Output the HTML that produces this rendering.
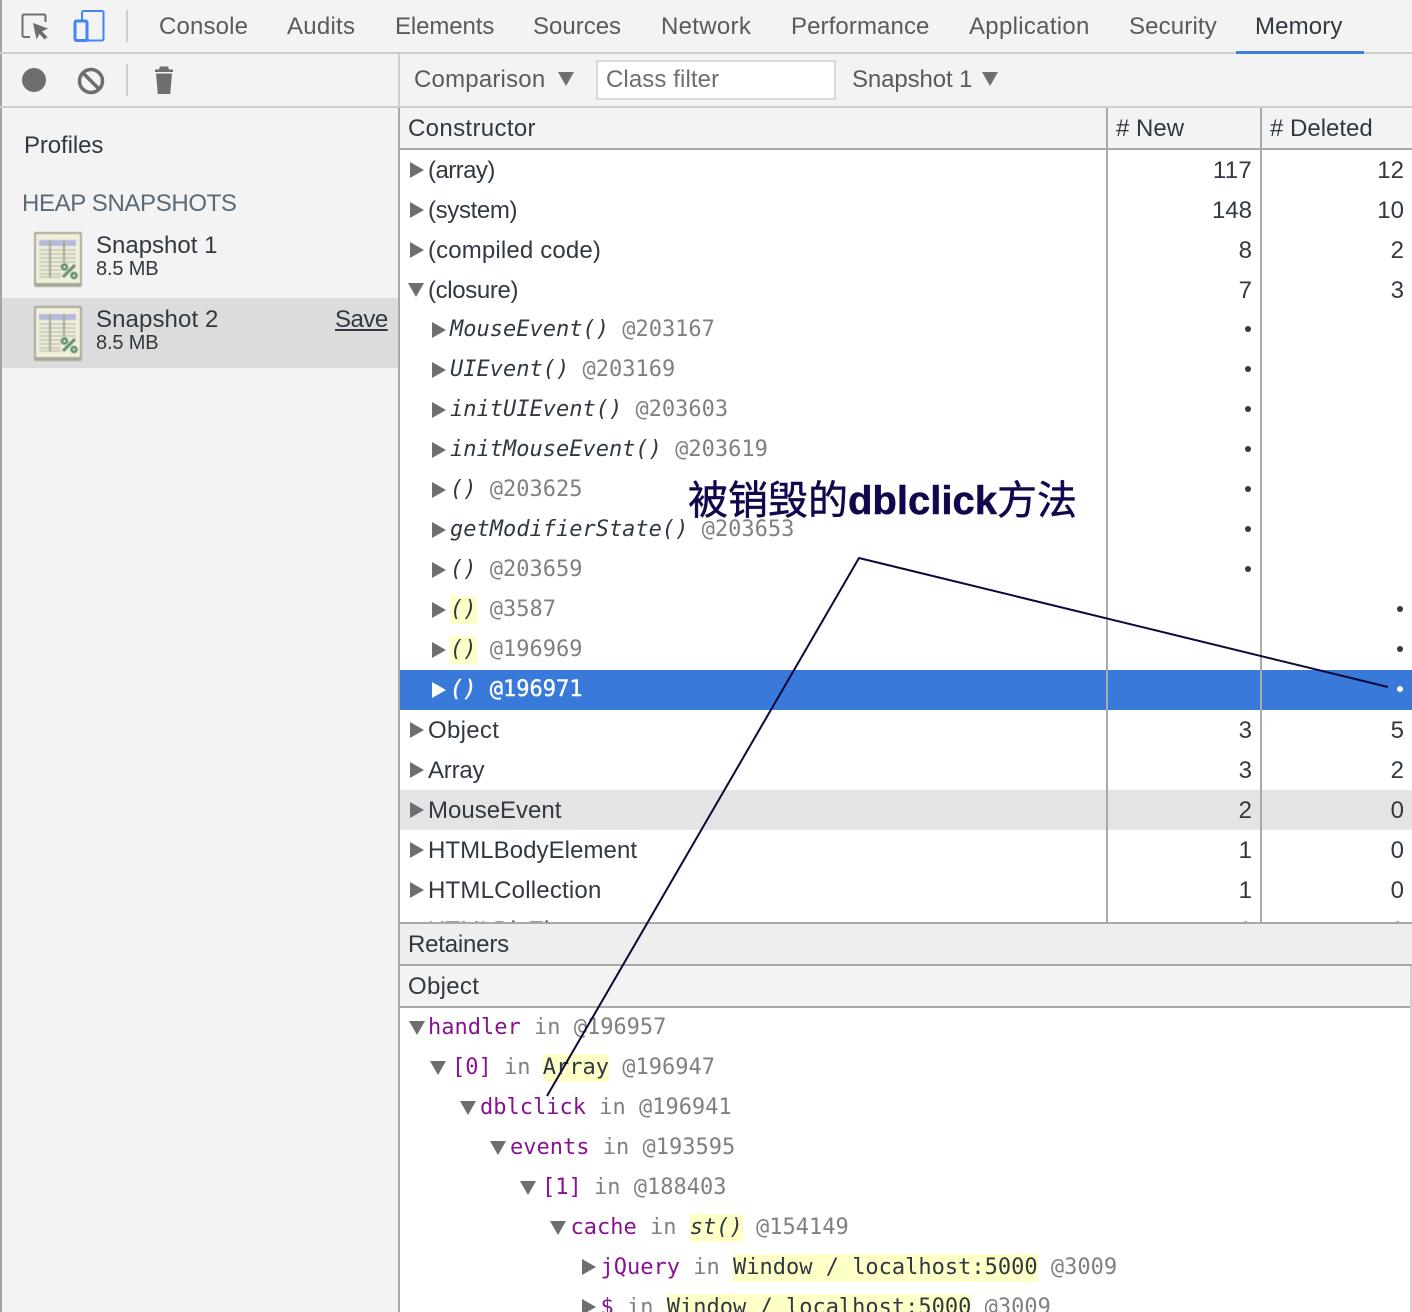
<!DOCTYPE html>
<html><head><meta charset="utf-8"><style>
html,body{margin:0;padding:0;background:#fff}
#p{position:relative;width:1412px;height:1312px;overflow:hidden;background:#fff;font-family:"Liberation Sans",sans-serif;font-size:24px;color:#303942}
.a{position:absolute}
.t{position:absolute;white-space:pre;line-height:40px;height:40px;margin-top:1px}
.tab{position:absolute;top:6px;line-height:40px;color:#5a5a5a;white-space:pre;margin-top:1px}
.m{font-family:"DejaVu Sans Mono","Liberation Mono",monospace;font-size:22px}
.rr{margin-top:2px}
.g{color:#808080}.pu{color:#881391}.y{background:#ffffc8;display:inline-block;line-height:28px}
i{font-style:italic}
.r{position:absolute;left:400px;width:1012px;height:40px}
.n{position:absolute;white-space:pre;line-height:40px;text-align:right;margin-top:1px}
.tr{position:absolute;width:0;height:0;border-style:solid;border-color:transparent transparent transparent #6e6e6e;border-width:8px 0 8px 14px}
.td{position:absolute;width:0;height:0;border-style:solid;border-color:#6e6e6e transparent transparent transparent;border-width:14px 8px 0 8px}
.dot{position:absolute;width:6px;height:6px;border-radius:50%;background:#303942}
</style></head><body><div id="p">
<!-- backgrounds -->
<div class="a" style="left:0;top:0;width:1412px;height:106px;background:#f3f3f3"></div>
<div class="a" style="left:0;top:108px;width:398px;height:1204px;background:#f3f3f3"></div>
<div class="a" style="left:0;top:0;width:2px;height:1312px;background:#a3a3a3"></div>
<div class="a" style="left:0;top:52px;width:1412px;height:2px;background:#cdcdcd"></div>
<div class="a" style="left:0;top:106px;width:1412px;height:2px;background:#cdcdcd"></div>
<div class="a" style="left:398px;top:54px;width:2px;height:1258px;background:#a9a9a9"></div>
<div class="a" style="left:398px;top:54px;width:2px;height:54px;background:#cdcdcd"></div>
<!-- top icons -->
<svg class="a" style="left:0;top:0" width="400" height="108" fill="none">
<path d="M30 37H24a1.500 1.500 0 0 1-1.500-1.500V16a1.500 1.500 0 0 1 1.500-1.500H44a1.500 1.500 0 0 1 1.500 1.500v6" stroke="#6e6e6e" stroke-width="2"/>
<path d="M33 23L48 28.500L42 31.500L47.500 37L44.500 39.500L39.500 34L36.500 39.500Z" fill="#6e6e6e"/>
<rect x="75" y="21" width="12" height="19.500" rx="1.500" stroke="#4285f4" stroke-width="3"/>
<path d="M82 21V12.500a1.500 1.500 0 0 1 1.500-1.500H102a1.500 1.500 0 0 1 1.500 1.500V39a1.500 1.500 0 0 1-1.500 1.500H87" stroke="#4285f4" stroke-width="2"/>
<rect x="126" y="10" width="2" height="32" fill="#cdcdcd"/>
<circle cx="34" cy="80" r="12" fill="#6e6e6e"/>
<circle cx="91" cy="81" r="11.500" stroke="#6e6e6e" stroke-width="3.500"/>
<path d="M83 73L99 89" stroke="#6e6e6e" stroke-width="3.500"/>
<rect x="126" y="64" width="2" height="32" fill="#cdcdcd"/>
<path d="M155 69.500h4l1-3h8l1 3h4v2.500h-18z" fill="#6e6e6e"/>
<path d="M156 73.500h16l-1.800 20.500h-12.400z" fill="#6e6e6e"/>
</svg>
<!-- tabs -->
<div class="tab" style="left:159px;letter-spacing:.15px">Console</div>
<div class="tab" style="left:287px;letter-spacing:.25px">Audits</div>
<div class="tab" style="left:395px;letter-spacing:-.1px">Elements</div>
<div class="tab" style="left:533px">Sources</div>
<div class="tab" style="left:661px;letter-spacing:.3px">Network</div>
<div class="tab" style="left:791px;letter-spacing:.1px">Performance</div>
<div class="tab" style="left:969px;letter-spacing:.3px">Application</div>
<div class="tab" style="left:1129px;letter-spacing:.15px">Security</div>
<div class="tab" style="left:1255px;color:#303942;letter-spacing:.15px">Memory</div>
<div class="a" style="left:1236px;top:51px;width:128px;height:3px;background:#3f7fe0"></div>
<!-- toolbar -->
<div class="t" style="left:414px;top:59px;color:#5a5a5a;letter-spacing:.2px">Comparison</div>
<div class="a" style="left:558px;top:72px;width:0;height:0;border-style:solid;border-color:#6e6e6e transparent transparent transparent;border-width:14px 8px 0 8px"></div>
<div class="a" style="left:596px;top:60px;width:236px;height:36px;background:#fff;border:2px solid #d9d9d9"></div>
<div class="t" style="left:606px;top:59px;color:#6e6e6e;letter-spacing:.1px">Class filter</div>
<div class="t" style="left:852px;top:59px;color:#5a5a5a;letter-spacing:-.1px">Snapshot 1</div>
<div class="a" style="left:982px;top:72px;width:0;height:0;border-style:solid;border-color:#6e6e6e transparent transparent transparent;border-width:14px 8px 0 8px"></div>
<!-- sidebar -->
<div class="t" style="left:24px;top:125px;letter-spacing:-.1px">Profiles</div>
<div class="t" style="left:22px;top:183px;color:#5a6a78;letter-spacing:-.36px">HEAP SNAPSHOTS</div>
<div class="a" style="left:2px;top:298px;width:396px;height:70px;background:#dcdcdc"></div>
<svg class="a" style="left:33px;top:231px;filter:blur(.6px)" width="50" height="58">
<rect x="1" y="1" width="48" height="55" rx="2" fill="#a8a898"/><rect x="3" y="3" width="44" height="49" fill="#f1f0dc"/><rect x="6" y="9" width="37" height="6" fill="#b5b9dc"/>
<path d="M6 19h37M6 23h37M6 27h37M6 31h37M6 35h22M6 39h22M6 43h22M6 46h22" stroke="#c2c2b2" stroke-width="1.500"/><path d="M17 9v38M31 9v22" stroke="#a8a89c" stroke-width="2"/>
<path d="M30 46L42 34" stroke="#5e8c6a" stroke-width="3"/><circle cx="31.500" cy="36" r="2.500" fill="none" stroke="#5e8c6a" stroke-width="2.500"/><circle cx="41" cy="44.500" r="2.500" fill="none" stroke="#5e8c6a" stroke-width="2.500"/></svg>
<svg class="a" style="left:33px;top:305px;filter:blur(.6px)" width="50" height="58">
<rect x="1" y="1" width="48" height="55" rx="2" fill="#a8a898"/><rect x="3" y="3" width="44" height="49" fill="#f1f0dc"/><rect x="6" y="9" width="37" height="6" fill="#b5b9dc"/>
<path d="M6 19h37M6 23h37M6 27h37M6 31h37M6 35h22M6 39h22M6 43h22M6 46h22" stroke="#c2c2b2" stroke-width="1.500"/><path d="M17 9v38M31 9v22" stroke="#a8a89c" stroke-width="2"/>
<path d="M30 46L42 34" stroke="#5e8c6a" stroke-width="3"/><circle cx="31.500" cy="36" r="2.500" fill="none" stroke="#5e8c6a" stroke-width="2.500"/><circle cx="41" cy="44.500" r="2.500" fill="none" stroke="#5e8c6a" stroke-width="2.500"/></svg>
<div class="t" style="left:96px;top:225px">Snapshot 1</div>
<div class="t" style="left:96px;top:248px;font-size:20px;letter-spacing:-.15px">8.5 MB</div>
<div class="t" style="left:96px;top:299px;letter-spacing:.1px">Snapshot 2</div>
<div class="t" style="left:96px;top:322px;font-size:20px;letter-spacing:-.15px">8.5 MB</div>
<div class="t" style="left:335px;top:299px;text-decoration:underline;letter-spacing:-.5px">Save</div>
<!-- table header -->
<div class="a" style="left:400px;top:108px;width:1012px;height:40px;background:#f3f3f3"></div>
<div class="a" style="left:400px;top:148px;width:1012px;height:2px;background:#a9a9a9"></div>
<div class="t" style="left:408px;top:108px;letter-spacing:.35px">Constructor</div>
<div class="t" style="left:1116px;top:108px"># New</div>
<div class="t" style="left:1270px;top:108px"># Deleted</div>
<!-- rows bg -->
<div class="r" style="top:670px;background:#3879d9"></div>
<div class="r" style="top:790px;background:#e4e4e4"></div>
<!-- rows -->
<i class="tr" style="left:410px;top:162px"></i><div class="t" style="left:428px;top:150px;letter-spacing:-.55px">(array)</div>
<i class="tr" style="left:410px;top:202px"></i><div class="t" style="left:428px;top:190px;letter-spacing:-.35px">(system)</div>
<i class="tr" style="left:410px;top:242px"></i><div class="t" style="left:428px;top:230px;letter-spacing:.15px">(compiled code)</div>
<i class="td" style="left:408px;top:283px"></i><div class="t" style="left:428px;top:270px;letter-spacing:-.35px">(closure)</div>

<i class="tr" style="left:432px;top:322px"></i><div class="t m" style="left:450px;top:309px"><i>MouseEvent()</i> <span class="g">@203167</span></div>
<i class="tr" style="left:432px;top:362px"></i><div class="t m" style="left:450px;top:349px"><i>UIEvent()</i> <span class="g">@203169</span></div>
<i class="tr" style="left:432px;top:402px"></i><div class="t m" style="left:450px;top:389px"><i>initUIEvent()</i> <span class="g">@203603</span></div>
<i class="tr" style="left:432px;top:442px"></i><div class="t m" style="left:450px;top:429px"><i>initMouseEvent()</i> <span class="g">@203619</span></div>
<i class="tr" style="left:432px;top:482px"></i><div class="t m" style="left:450px;top:469px"><i>()</i> <span class="g">@203625</span></div>
<i class="tr" style="left:432px;top:522px"></i><div class="t m" style="left:450px;top:509px"><i>getModifierState()</i> <span class="g">@203653</span></div>
<i class="tr" style="left:432px;top:562px"></i><div class="t m" style="left:450px;top:549px"><i>()</i> <span class="g">@203659</span></div>
<i class="tr" style="left:432px;top:602px"></i><div class="t m" style="left:450px;top:589px"><i class="y">()</i> <span class="g">@3587</span></div>
<i class="tr" style="left:432px;top:642px"></i><div class="t m" style="left:450px;top:629px"><i class="y">()</i> <span class="g">@196969</span></div>
<i class="tr" style="left:432px;top:682px;border-left-color:#fff"></i><div class="t m" style="left:450px;top:669px;color:#fff;-webkit-text-stroke:.4px #fff"><i>()</i> <span>@196971</span></div>

<i class="tr" style="left:410px;top:722px"></i><div class="t" style="left:428px;top:710px;letter-spacing:.3px">Object</div>
<i class="tr" style="left:410px;top:762px"></i><div class="t" style="left:428px;top:750px;letter-spacing:-.2px">Array</div>
<i class="tr" style="left:410px;top:802px"></i><div class="t" style="left:428px;top:790px">MouseEvent</div>
<i class="tr" style="left:410px;top:842px"></i><div class="t" style="left:428px;top:830px;letter-spacing:.07px">HTMLBodyElement</div>
<i class="tr" style="left:410px;top:882px"></i><div class="t" style="left:428px;top:870px;letter-spacing:.2px">HTMLCollection</div>
<i class="tr" style="left:410px;top:922px"></i><div class="t" style="left:428px;top:910px">HTMLDivElement</div>

<!-- numbers -->
<div class="n" style="right:160px;top:150px;letter-spacing:.3px">117</div><div class="n" style="right:8px;top:150px">12</div>
<div class="n" style="right:160px;top:190px">148</div><div class="n" style="right:8px;top:190px">10</div>
<div class="n" style="right:160px;top:230px">8</div><div class="n" style="right:8px;top:230px">2</div>
<div class="n" style="right:160px;top:270px">7</div><div class="n" style="right:8px;top:270px">3</div>
<div class="n" style="right:160px;top:710px">3</div><div class="n" style="right:8px;top:710px">5</div>
<div class="n" style="right:160px;top:750px">3</div><div class="n" style="right:8px;top:750px">2</div>
<div class="n" style="right:160px;top:790px">2</div><div class="n" style="right:8px;top:790px">0</div>
<div class="n" style="right:160px;top:830px">1</div><div class="n" style="right:8px;top:830px">0</div>
<div class="n" style="right:160px;top:870px">1</div><div class="n" style="right:8px;top:870px">0</div>
<div class="n" style="right:160px;top:910px">1</div><div class="n" style="right:8px;top:910px">1</div>
<!-- dots -->
<div class="dot" style="left:1245px;top:326px"></div>
<div class="dot" style="left:1245px;top:366px"></div>
<div class="dot" style="left:1245px;top:406px"></div>
<div class="dot" style="left:1245px;top:446px"></div>
<div class="dot" style="left:1245px;top:486px"></div>
<div class="dot" style="left:1245px;top:526px"></div>
<div class="dot" style="left:1245px;top:566px"></div>
<div class="dot" style="left:1397px;top:606px"></div>
<div class="dot" style="left:1397px;top:646px"></div>
<div class="dot" style="left:1397px;top:686px;background:#fff"></div>
<!-- col lines -->
<div class="a" style="left:1106px;top:108px;width:2px;height:815px;background:#a9a9a9"></div>
<div class="a" style="left:1260px;top:108px;width:2px;height:815px;background:#a9a9a9"></div>
<!-- retainers -->
<div class="a" style="left:400px;top:922px;width:1012px;height:390px;background:#fff"></div>
<div class="a" style="left:400px;top:922px;width:1012px;height:2px;background:#a9a9a9"></div>
<div class="a" style="left:400px;top:924px;width:1012px;height:40px;background:#eeeeee"></div>
<div class="a" style="left:400px;top:964px;width:1012px;height:2px;background:#a9a9a9"></div>
<div class="a" style="left:400px;top:966px;width:1012px;height:40px;background:#f3f3f3"></div>
<div class="a" style="left:400px;top:1006px;width:1012px;height:2px;background:#a9a9a9"></div>
<div class="a" style="left:1410px;top:966px;width:2px;height:346px;background:#d0d0d0"></div>
<div class="t" style="left:408px;top:924px;letter-spacing:-.2px">Retainers</div>
<div class="t" style="left:408px;top:966px;letter-spacing:.3px">Object</div>

<i class="td" style="left:409px;top:1021px"></i><div class="t m rr" style="left:428px;top:1006px"><span class="pu">handler</span> <span class="g">in @196957</span></div>
<i class="td" style="left:430px;top:1061px"></i><div class="t m rr" style="left:452px;top:1046px"><span class="pu">[0]</span> <span class="g" style="margin-left:-1px">in</span> <span class="y" style="margin-left:-1px">Array</span> <span class="g">@196947</span></div>
<i class="td" style="left:460px;top:1101px"></i><div class="t m rr" style="left:480px;top:1086px"><span class="pu">dblclick</span> <span class="g">in @196941</span></div>
<i class="td" style="left:490px;top:1141px"></i><div class="t m rr" style="left:510px;top:1126px"><span class="pu">events</span> <span class="g">in @193595</span></div>
<i class="td" style="left:520px;top:1181px"></i><div class="t m rr" style="left:542px;top:1166px"><span class="pu">[1]</span> <span class="g" style="margin-left:-1px">in @188403</span></div>
<i class="td" style="left:550px;top:1221px"></i><div class="t m rr" style="left:570.500px;top:1206px"><span class="pu">cache</span> <span class="g">in</span> <span class="y"><i>st()</i></span> <span class="g">@154149</span></div>
<i class="tr" style="left:582px;top:1259px"></i><div class="t m rr" style="left:600.500px;top:1246px"><span class="pu">jQuery</span> <span class="g">in</span> <span class="y">Window / localhost:5000</span> <span class="g">@3009</span></div>
<i class="tr" style="left:582px;top:1299px"></i><div class="t m rr" style="left:600.500px;top:1286px"><span class="pu">$</span> <span class="g">in</span> <span class="y">Window / localhost:5000</span> <span class="g">@3009</span></div>

<!-- annotation -->
<svg class="a" style="left:0;top:0" width="1412" height="1312" fill="none"><path d="M547 1096L859 558L1388 687" stroke="#0f0738" stroke-width="2"/></svg>
<div class="a" style="left:688px;top:476px;white-space:pre;line-height:50px;font-size:40px;color:#12064d;font-family:'Liberation Sans','Noto Sans CJK SC',sans-serif;-webkit-text-stroke:.5px #12064d">被销毁的<b>dblclick</b>方法</div>
</div></body></html>
